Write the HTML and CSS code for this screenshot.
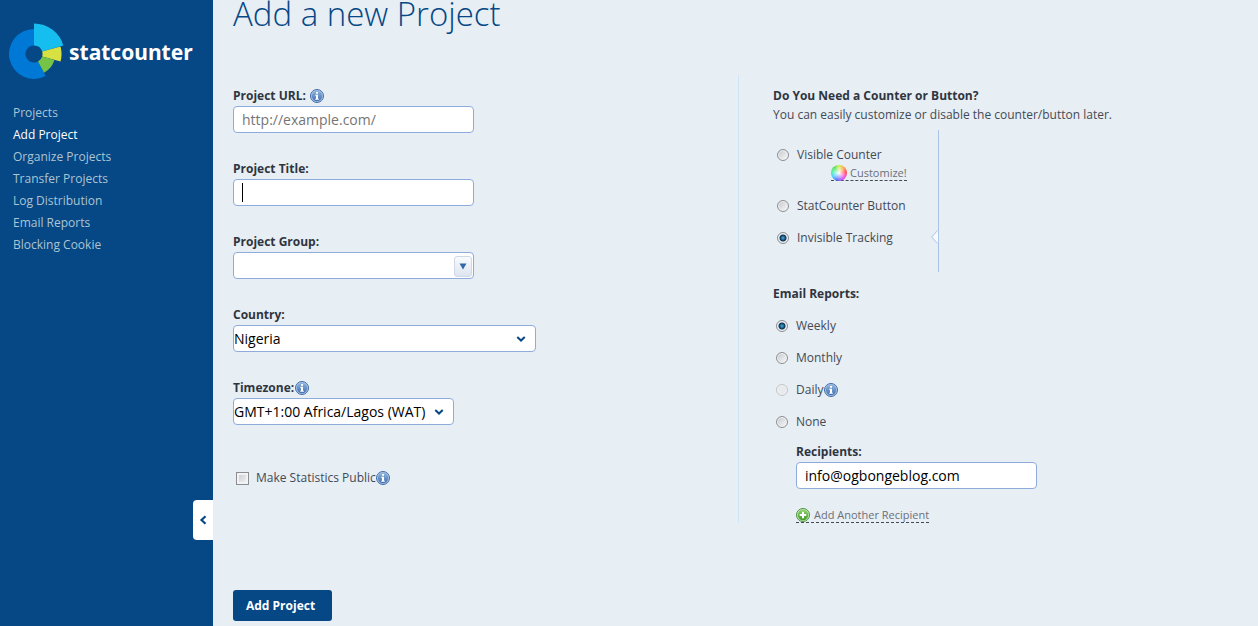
FILE: index.html
```html
<!DOCTYPE html>
<html lang="en">
<head>
<meta charset="utf-8">
<title>Add a new Project</title>
<link rel="stylesheet" href="styles.css">
</head>
<body>
<svg class="defs" aria-hidden="true">
  <defs>
    <linearGradient id="blue" x1="0" y1="0" x2="0" y2="1"><stop offset="0" stop-color="#8db4de"/><stop offset="1" stop-color="#4471ae"/></linearGradient>
    <linearGradient id="green" x1="0" y1="0" x2="0" y2="1"><stop offset="0" stop-color="#8fd06a"/><stop offset="1" stop-color="#3f9a2c"/></linearGradient>
    <symbol id="info" viewBox="0 0 14 14">
      <circle cx="7" cy="7" r="6.5" fill="#a9c6e8" stroke="#446ca8"/>
      <circle cx="7" cy="7" r="5.2" fill="url(#blue)"/>
      <path d="M6 3h2v1.7H6zM5.2 5.7H8v4h.9v1H5.2v-1H6V6.700h-.8z" fill="#fff"/>
    </symbol>
    <symbol id="chevron" viewBox="0 0 10 8"><path d="M1.300 2l3.700 3.500L8.700 2" fill="none" stroke="#064785" stroke-width="2"/></symbol>
  </defs>
</svg>
<div class="layout">
  <aside class="sidebar">
    <a class="logo" href="#">
      <svg class="logo-mark" viewBox="-25 -31 55 57" aria-hidden="true">
        <path fill="#0078d6" d="M4 7.500L11.700 22.100A25 25 0 1 1 0-25V-8.500A8.500 8.500 0 1 0 4 7.500z"/>
        <path fill="#16bef0" d="M0-8.500V-30.500A30.500 30.500 0 0 1 29.300-8.600L8.200-2.400A8.500 8.500 0 0 0 0-8.500z"/>
        <path fill="#d8e142" d="M8.200-2.400L26.500-7.500A27.500 27.500 0 0 1 26.500 7.500L8.200 2.400A8.500 8.500 0 0 0 8.200-2.400z"/>
        <path fill="#76c447" d="M8.200 2.400L20.400 6A21.300 21.300 0 0 1 10 18.800L4 7.500A8.500 8.500 0 0 0 8.200 2.400z"/>
      </svg>
      <span>statcounter</span>
    </a>
    <nav class="menu">
      <a href="#">Projects</a>
      <a class="current" href="#">Add Project</a>
      <a href="#">Organize Projects</a>
      <a href="#">Transfer Projects</a>
      <a href="#">Log Distribution</a>
      <a href="#">Email Reports</a>
      <a href="#">Blocking Cookie</a>
    </nav>
    <button class="collapse" type="button" aria-label="Collapse menu">
      <svg width="8" height="10" viewBox="0 0 8 10"><path d="M6.500 1.200L2.500 5l4 3.800" fill="none" stroke="#064785" stroke-width="2.200"/></svg>
    </button>
  </aside>
  <main class="main">
    <h1>Add a new Project</h1>
    <form>
      <div class="columns">
        <div class="details">
          <div class="field">
            <label class="label" for="url">Project URL: <svg class="info spaced"><use href="#info"/></svg></label>
            <input class="text" id="url" type="text" placeholder="http://example.com/">
          </div>
          <div class="field">
            <label class="label" for="title">Project Title:</label>
            <div class="control"><input class="text" id="title" type="text"><span class="caret"></span></div>
          </div>
          <div class="field">
            <label class="label" for="group">Project Group:</label>
            <div class="control">
              <input class="text" id="group" type="text">
              <button class="drop" type="button" aria-label="Show groups"><svg width="8" height="7" viewBox="0 0 8 7"><path d="M.5.500h7L4 6.500z" fill="#2f67a8"/></svg></button>
            </div>
          </div>
          <div class="field">
            <label class="label" for="country">Country:</label>
            <div class="control country"><select class="text" id="country"><option>Nigeria</option></select><svg class="chevron"><use href="#chevron"/></svg></div>
          </div>
          <div class="field">
            <label class="label" for="zone">Timezone:<svg class="info"><use href="#info"/></svg></label>
            <div class="control zone"><select class="text" id="zone"><option>GMT+1:00 Africa/Lagos (WAT)</option></select><svg class="chevron"><use href="#chevron"/></svg></div>
          </div>
          <div class="public">
            <input class="check" id="public" type="checkbox"><label for="public">Make Statistics Public</label><svg class="info"><use href="#info"/></svg>
          </div>
        </div>
        <div class="options">
          <h2>Do You Need a Counter or Button?</h2>
          <p>You can easily customize or disable the counter/button later.</p>
          <div class="counter">
            <div class="choice"><input type="radio" name="counter" id="visible"><label for="visible">Visible Counter</label></div>
            <div class="customize">
              <a class="action" href="#"><span class="wheel"></span>Customize!</a>
            </div>
            <div class="choice"><input type="radio" name="counter" id="button"><label for="button">StatCounter Button</label></div>
            <div class="choice"><input type="radio" name="counter" id="invisible" checked><label for="invisible">Invisible Tracking</label></div>
            <svg class="pointer" width="7" height="14" viewBox="0 0 7 14"><path d="M7 0L0.700 7L7 14z" fill="#f8fafd"/><path d="M6.500.5L.7 7l5.800 6.500" fill="none" stroke="#a9c4e6"/></svg>
          </div>
          <h2>Email Reports:</h2>
          <div class="reports">
            <div class="choice"><input type="radio" name="report" id="weekly" checked><label for="weekly">Weekly</label></div>
            <div class="choice"><input type="radio" name="report" id="monthly"><label for="monthly">Monthly</label></div>
            <div class="choice"><input type="radio" name="report" id="daily" disabled><label for="daily">Daily</label><svg class="info"><use href="#info"/></svg></div>
            <div class="choice"><input type="radio" name="report" id="none"><label for="none">None</label></div>
          </div>
          <div class="recipients">
            <label class="label" for="mail">Recipients:</label>
            <input class="text" id="mail" type="text" value="info@ogbongeblog.com">
            <a class="action add" href="#"><svg width="14" height="14" viewBox="0 0 14 14"><circle cx="7" cy="7" r="6.500" fill="#c3e5b0" stroke="#4a9440"/><circle cx="7" cy="7" r="5.200" fill="url(#green)"/><path d="M7 3.700v6.600M3.700 7h6.600" stroke="#fff" stroke-width="2"/></svg>Add Another Recipient</a>
          </div>
        </div>
      </div>
      <button class="submit" type="submit">Add Project</button>
    </form>
  </main>
</div>
</body>
</html>
```

FILE: styles.css
```css
* {
  box-sizing: border-box;
}

body {
  margin: 0;
  background: #e7eef4;
  color: #444a54;
  font: 12px/20px "Open Sans", sans-serif;
}

.defs {
  position: absolute;
  width: 0;
  height: 0;
}

input,
select,
button {
  margin: 0;
  font-family: inherit;
}

.layout {
  display: flex;
  min-height: 100vh;
}

/* Sidebar */
.sidebar {
  position: relative;
  flex: 0 0 213px;
  padding: 23px 0 0 9px;
  background: #064785;
}

.logo {
  display: flex;
  align-items: center;
  gap: 5px;
  color: #fff;
  font: bold 21px/56px "Noto Sans", sans-serif;
  text-decoration: none;
}

.logo-mark {
  width: 55px;
  height: 57px;
}

.menu {
  display: flex;
  flex-direction: column;
  align-items: flex-start;
  padding: 22px 4px 0;
}

.menu a {
  color: #abc5d3;
  line-height: 22px;
  text-decoration: none;
}

.menu .current {
  color: #fff;
}

.collapse {
  position: absolute;
  right: 0;
  bottom: 86px;
  display: flex;
  align-items: center;
  justify-content: center;
  width: 20px;
  height: 40px;
  padding: 0;
  border: 0;
  border-radius: 4px 0 0 4px;
  background: #fff;
}

/* Main area */
.main {
  flex: 1;
  min-width: 0;
  padding: 0 20px 5px;
}

h1 {
  margin: 0 0 47px;
  color: #064785;
  font-size: 33px;
  font-weight: 300;
  line-height: 28px;
}

.columns {
  display: grid;
  grid-template-columns: 505px 1fr;
}

.details {
  padding-top: 11px;
}

.field {
  margin-bottom: 26px;
}

.label,
h2 {
  display: flex;
  align-items: center;
  margin: 0;
  color: #2f3540;
  font-size: 12px;
  font-weight: 700;
  line-height: 20px;
}

.info {
  flex: none;
  width: 14px;
  height: 14px;
}

.label .info,
.choice .info {
  margin-left: 1px;
}

.label .spaced {
  margin-left: 4px;
}

.control {
  position: relative;
  width: 241px;
}

.country {
  width: 303px;
}

.zone {
  width: 221px;
}

.text {
  display: block;
  width: 241px;
  height: 27px;
  padding: 0 8px;
  border: 1px solid #8fabdb;
  border-radius: 4px;
  outline: 0;
  background: #fff;
  color: #000;
  font-size: 14px;
}

.text::placeholder {
  color: #757575;
}

select.text {
  width: 100%;
  padding: 0;
  appearance: none;
}

.caret {
  position: absolute;
  top: 4px;
  left: 9px;
  width: 1px;
  height: 19px;
  background: #000;
}

.chevron {
  position: absolute;
  top: 10px;
  right: 10px;
  width: 10px;
  height: 8px;
  pointer-events: none;
}

.drop {
  position: absolute;
  top: 4px;
  right: 2px;
  display: flex;
  align-items: center;
  justify-content: center;
  width: 18px;
  height: 21px;
  padding: 0;
  border: 1px solid #cfd9e6;
  border-radius: 3px;
  background: linear-gradient(#f9fbfd, #dde5f0);
}

.public {
  display: flex;
  align-items: center;
  padding: 17px 0 0 3px;
}

.check {
  width: 13px;
  height: 13px;
  margin-right: 7px;
  border: 1px solid #8b8d90;
  background: linear-gradient(135deg, #c4c9cd, #f6f6f6);
  box-shadow: inset 0 0 0 2px #f2f3f4;
  appearance: none;
}

/* Options */
.options {
  padding: 11px 0 0 34px;
  border-left: 1px solid #cfe2f7;
}

.options p {
  margin: 0;
  line-height: 18px;
}

.counter {
  position: relative;
  width: 166px;
  height: 142px;
  margin: 6px 0 12px;
  padding: 15px 0 0 4px;
  border-right: 1px solid #a9c4e6;
}

.choice {
  display: flex;
  align-items: center;
  margin-bottom: 12px;
}

.counter .choice:first-child {
  margin-bottom: 0;
}

.choice input {
  width: 12px;
  height: 12px;
  margin-right: 8px;
  border: 1px solid #8b8f93;
  border-radius: 50%;
  background: linear-gradient(135deg, #c3c7cb, #fafafa);
  box-shadow: inset 0 0 0 1px #f2f3f4;
  appearance: none;
}

.choice input:checked {
  background: radial-gradient(circle at 50% 50%, #58b4e0 0, #1a5a86 2px, #0d3352 3px, #dfe3e6 4px);
}

.choice input:disabled {
  border-color: #c2c5c8;
  background: #e8eaeb;
}

.customize {
  display: flex;
  padding: 0 0 15px 54px;
}

.action {
  display: inline-flex;
  align-items: center;
  gap: 3px;
  height: 16px;
  border-bottom: 1px dashed #444a54;
  color: #6b7078;
  font-size: 11px;
  line-height: 14px;
  text-decoration: none;
}

.wheel {
  width: 16px;
  height: 16px;
  border-radius: 50%;
  background: radial-gradient(#fff, #fff0 75%), conic-gradient(#c8f03c, #ff9a3c, #ff3030, #ff30c0, #a040ff, #4060ff, #30c8ff, #30f0a0, #40d840, #c8f03c);
}

.pointer {
  position: absolute;
  right: 0;
  top: 100px;
}

.reports {
  padding: 12px 0 0 3px;
}

.recipients {
  display: flex;
  flex-direction: column;
  align-items: flex-start;
  padding-left: 23px;
}

.recipients .label {
  margin-top: -2px;
}

.add {
  gap: 4px;
  margin-top: 18px;
}

.submit {
  height: 31px;
  margin-top: 67px;
  padding: 0 17px 0 13px;
  border: 0;
  border-radius: 3px;
  background: #064785;
  color: #fff;
  font-size: 12px;
  font-weight: 700;
}
```
